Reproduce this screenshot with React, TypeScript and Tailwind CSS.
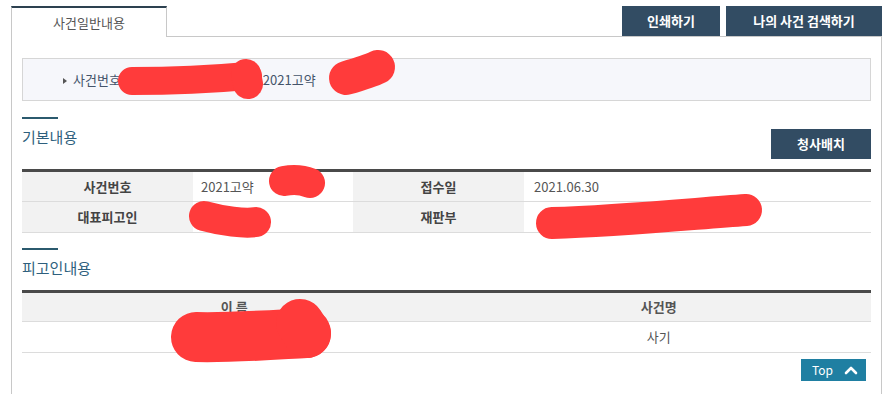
import React from "react";

const font = { fontFamily: '"Noto Sans CJK KR", "Noto Sans", sans-serif' };

function ChevronUp() {
    return (
        <svg className="w-[14px] h-[10px]" viewBox="0 0 14 10" fill="none" stroke="white" strokeWidth="2.6" strokeLinecap="round" strokeLinejoin="round">
            <polyline points="2 8 7 3 12 8" />
        </svg>
    );
}

// red marker strokes over the redacted text
function Redactions() {
    return (
        <svg className="absolute inset-0 pointer-events-none" width="890" height="394" viewBox="0 0 890 394" fill="none" stroke="#ff3b3b" strokeLinecap="round" strokeLinejoin="round">
            <path d="M132 81 C 170 81, 215 79, 248 76" strokeWidth="28" />
            <path d="M246 74 L 248 84" strokeWidth="30" />
            <path d="M346 78 C 360 74, 372 70, 378 67" strokeWidth="34" />
            <path d="M284 181 C 295 179, 305 181, 310 183" strokeWidth="30" />
            <path d="M204 216 C 222 221, 245 224, 256 222" strokeWidth="30" />
            <path d="M552 223 C 620 221, 690 214, 746 210" strokeWidth="32" />
            <path d="M196 337 C 230 338, 270 335, 306 333" strokeWidth="50" />
            <path d="M300 323 L 307 334" strokeWidth="48" />
        </svg>
    );
}

export default function App() {
    return (
        <div className="relative w-[890px] h-[394px] overflow-hidden bg-white text-[13px]" style={font}>
            <div className="ml-[11px] w-[871px] mt-[6px]">
                {/* Tab + buttons */}
                <div className="flex h-[31px]">
                    <div className="w-[156px] border-l border-r border-t-2 border-l-[#c8c8c8] border-r-[#c8c8c8] border-t-[#2d4150] flex items-center justify-center text-[#555]">
                        사건일반내용
                    </div>
                    <div className="flex-1 border-b border-[#c8c8c8] flex justify-end items-start gap-[6px]">
                        <button className="w-[98px] h-[30px] bg-[#324c63] text-white font-bold">인쇄하기</button>
                        <button className="w-[156px] h-[30px] bg-[#324c63] text-white font-bold">나의 사건 검색하기</button>
                    </div>
                </div>

                {/* Body */}
                <div className="border-l border-r border-[#c8c8c8] pl-[10px] pr-[10px] pt-[21px] h-[360px]">
                    <div className="h-[43px] border border-[#d6d6d6] bg-[#f6f7fb] flex items-center pl-[40px] text-[#44546a]">
                        <span className="w-0 h-0 border-y-[3px] border-y-transparent border-l-[4px] border-l-[#555] mr-[6px] mt-[3px]" />
                        <span>사건번호</span>
                        <span className="ml-[142px]">2021고약</span>
                    </div>

                    {/* 기본내용 */}
                    <div className="mt-[16px] w-[36px] h-[2px] bg-[#2b5a6e]" />
                    <div className="flex justify-between items-start">
                        <h2 className="mt-[8px] text-[15px] leading-[20px] text-[#2e5f7d]">기본내용</h2>
                        <button className="mt-[10px] w-[100px] h-[30px] bg-[#324c63] text-white font-bold">청사배치</button>
                    </div>
                    <div className="mt-[10px] border-t-[3px] border-[#4a4a4a]">
                        <div className="grid grid-cols-[171px_160px_171px_1fr] h-[30px] border-b border-[#dcdcdc]">
                            <div className="bg-[#f2f2f2] flex items-center justify-center font-bold text-[#444]">사건번호</div>
                            <div className="flex items-center pl-[8px] text-[#555]">2021고약</div>
                            <div className="bg-[#f2f2f2] flex items-center justify-center font-bold text-[#444]">접수일</div>
                            <div className="flex items-center pl-[10px] text-[#555]">2021.06.30</div>
                        </div>
                        <div className="grid grid-cols-[171px_160px_171px_1fr] h-[31px] border-b border-[#dcdcdc]">
                            <div className="bg-[#f2f2f2] flex items-center justify-center font-bold text-[#444]">대표피고인</div>
                            <div />
                            <div className="bg-[#f2f2f2] flex items-center justify-center font-bold text-[#444]">재판부</div>
                            <div />
                        </div>
                    </div>

                    {/* 피고인내용 */}
                    <div className="mt-[15px] w-[36px] h-[2px] bg-[#2b5a6e]" />
                    <h2 className="mt-[8px] text-[15px] leading-[20px] text-[#2e5f7d]">피고인내용</h2>
                    <div className="mt-[12px] border-t-[3px] border-[#4a4a4a]">
                        <div className="grid grid-cols-2 h-[29px] bg-[#f2f2f2] border-b border-[#dcdcdc] font-bold text-[#555]">
                            <div className="flex items-center justify-center">이 름</div>
                            <div className="flex items-center justify-center">사건명</div>
                        </div>
                        <div className="grid grid-cols-2 h-[31px] border-b border-[#dcdcdc] text-[#555]">
                            <div />
                            <div className="flex items-center justify-center">사기</div>
                        </div>
                    </div>
                    <div className="flex justify-end mt-[6px] pr-[5px]">
                        <button className="w-[65px] h-[22px] bg-[#1f7fa2] text-white text-[12px] flex items-center justify-between pl-[11px] pr-[8px]">
                            <span>Top</span>
                            <ChevronUp />
                        </button>
                    </div>
                </div>
            </div>
            <Redactions />
        </div>
    );
}
